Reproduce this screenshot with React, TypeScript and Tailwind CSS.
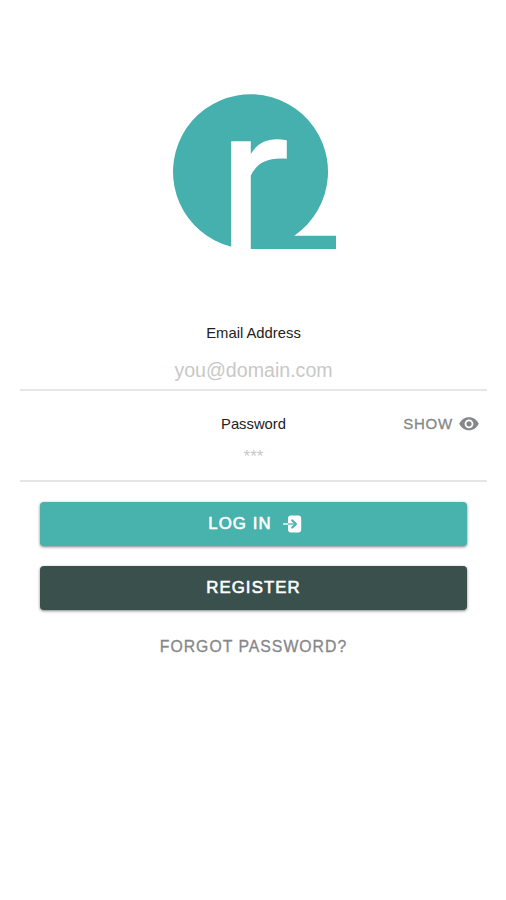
import React from 'react';

function Logo() {
  return (
    <svg className="w-[190px] h-[175px]" viewBox="0 0 190 175" fill="#45b0ad" aria-label="r2">
      <path d="M71.2 161.8A77.5 77.5 0 1 1 134.3 150.7H176V164H90.8V90.5C97 78 107 72.2 126.8 73.7V55.3C110 52 98 56.5 90.8 69V56.3H71.2Z" />
    </svg>
  );
}

function EyeIcon() {
  return (
    <svg className="w-5 h-[14px]" viewBox="0 0 20 14" fill="#86878a">
      <path
        fillRule="evenodd"
        d="M10 0.3C5.6 0.3 2 3 0.2 6.8C2 10.6 5.6 13.3 10 13.3C14.4 13.3 18 10.6 19.8 6.8C18 3 14.4 0.3 10 0.3ZM10 11.2A4.4 4.4 0 1 1 10 2.4A4.4 4.4 0 0 1 10 11.2Z"
      />
      <circle cx="10" cy="6.8" r="2.6" />
    </svg>
  );
}

function LogInIcon() {
  return (
    <svg className="w-[19px] h-[18px]" viewBox="0 0 19 18" fill="none">
      <rect x="5" y="0.6" width="13.2" height="17" rx="3" fill="#fff" />
      <path d="M0.8 9H5" stroke="#c4e7e4" strokeWidth="2" strokeLinecap="round" />
      <path d="M5 9H12" stroke="#8fcfcb" strokeWidth="2" />
      <path d="M9.2 5.4L13 9L9.2 12.6" stroke="#48b2ac" strokeWidth="2" strokeLinecap="round" strokeLinejoin="round" />
    </svg>
  );
}

export default function App() {
  return (
    <div className="min-h-screen bg-white font-['Liberation_Sans',Arial,sans-serif]">
      <main className="ml-5 w-[467px] pt-[85px] flex flex-col">
        <div className="pl-[140px]">
          <Logo />
        </div>

        {/* Email */}
        <div className="mt-[63px] h-[68px] border-b-2 border-[#e6e6e6] flex flex-col items-center">
          <label className="text-[14.8px] leading-5 text-[#222222]">Email Address</label>
          <div className="mt-[15px] text-[19.6px] leading-6 text-[#c8c8c8]">you@domain.com</div>
        </div>

        {/* Password */}
        <div className="h-[91px] border-b-2 border-[#e6e6e6]">
          <div className="pt-[23px] grid grid-cols-[1fr_auto_1fr] items-center">
            <label className="col-start-2 text-[14.8px] leading-5 text-[#222222]">Password</label>
            <button className="justify-self-end pr-2 flex items-center gap-1.5 text-[#86878a]">
              <span className="text-[15px] leading-5 tracking-[0.8px] [-webkit-text-stroke:0.3px]">SHOW</span>
              <EyeIcon />
            </button>
          </div>
          <div className="mt-[11px] text-center text-[17px] leading-6 text-[#c8c8c8]">***</div>
        </div>

        {/* Actions */}
        <div className="mt-5 px-5 flex flex-col gap-5">
          <button className="h-11 rounded-[4px] bg-[#48b2ac] shadow-[0_1px_3px_rgba(0,0,0,0.5)] flex items-center justify-center gap-[11px] pl-[3px] text-white">
            <span className="text-[16.8px] leading-6 tracking-[1.1px] [-webkit-text-stroke:0.6px]">LOG IN</span>
            <LogInIcon />
          </button>
          <button className="h-11 rounded-[4px] bg-[#3a504d] shadow-[0_1px_3px_rgba(0,0,0,0.5)] text-[16.8px] leading-6 tracking-[1.1px] text-white [-webkit-text-stroke:0.6px]">
            REGISTER
          </button>
        </div>

        <button className="mt-[25px] text-[15.8px] leading-6 tracking-[1px] text-[#86878a] [-webkit-text-stroke:0.3px]">FORGOT PASSWORD?</button>
      </main>
    </div>
  );
}
